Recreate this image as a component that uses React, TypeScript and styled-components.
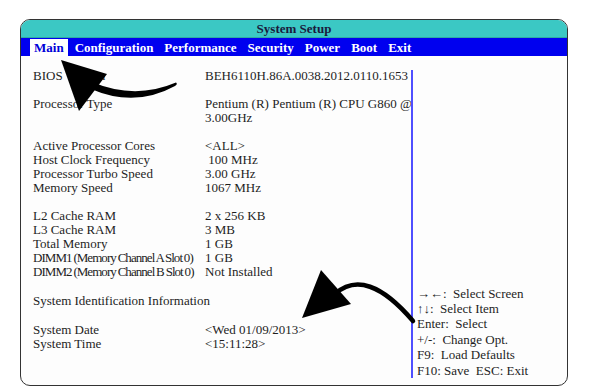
import styled, { createGlobalStyle } from "styled-components";

const GlobalStyle = createGlobalStyle`
  html, body {
    margin: 0;
    padding: 0;
    background: #ffffff;
  }
  body {
    font-family: "Liberation Serif", "DejaVu Serif", serif;
    color: #1e1e1e;
  }
`;

const Page = styled.div`
  position: relative;
  width: 606px;
  height: 388px;
  overflow: hidden;
  padding: 19px 0 0 20px;
  box-sizing: border-box;
`;

const Frame = styled.div`
  width: 548px;
  height: 367px;
  box-sizing: border-box;
  border: 1.5px solid #333333;
  border-radius: 10px;
  overflow: hidden;
  display: flex;
  flex-direction: column;
  background: #fdfdfd;
`;

const TitleBar = styled.div`
  height: 17px;
  line-height: 18px;
  background: #3bc8c4;
  border-bottom: 1px solid #2fa9a6;
  text-align: center;
  font-weight: bold;
  font-size: 13px;
  color: #1a1a3c;
`;

const MenuBar = styled.div`
  height: 18px;
  background: #0000ef;
  display: flex;
  align-items: flex-end;
  gap: 3px;
  padding-left: 9px;
`;

const MenuItem = styled.div<{ $active?: boolean }>`
  height: 17px;
  line-height: 17px;
  padding: 0 4px;
  font-weight: bold;
  font-size: 13px;
  color: ${(p) => (p.$active ? "#0000d8" : "#ffffff")};
  background: ${(p) => (p.$active ? "#ffffff" : "transparent")};
`;

const Body = styled.div`
  flex: 1;
  display: flex;
`;

const InfoPanel = styled.div`
  width: 390px;
  padding: 13px 0 0 12px;
  box-sizing: border-box;
  font-size: 13px;
  line-height: 14px;
`;

const Section = styled.div<{ $gap: number }>`
  margin-top: ${(p) => p.$gap}px;
`;

const Row = styled.div`
  display: grid;
  grid-template-columns: 172px 1fr;
  white-space: nowrap;
`;

const Label = styled.span<{ $tight?: boolean }>`
  letter-spacing: ${(p) => (p.$tight ? "-0.95px" : "0")};
  word-spacing: ${(p) => (p.$tight ? "-0.5px" : "0")};
`;

const Value = styled.span``;

const HelpPanel = styled.div`
  flex: 1;
  margin: 14px 0 7px;
  border-left: 2px solid #4f4fff;
  padding-left: 4px;
  display: flex;
  flex-direction: column;
  justify-content: flex-end;
  font-size: 13px;
  line-height: 15.4px;
  white-space: pre;
`;

const Arrows = styled.svg`
  position: absolute;
  left: 0;
  top: 0;
  pointer-events: none;
`;

const menu = ["Main", "Configuration", "Performance", "Security", "Power", "Boot", "Exit"];

type Item = { label: string; value: string; tight?: boolean };

const sections: { gap: number; rows: Item[] }[] = [
  { gap: 0, rows: [{ label: "BIOS Version", value: "BEH6110H.86A.0038.2012.0110.1653" }] },
  {
    gap: 14,
    rows: [
      { label: "Processor Type", value: "Pentium (R) Pentium (R) CPU G860 @" },
      { label: "", value: "3.00GHz" },
    ],
  },
  {
    gap: 14,
    rows: [
      { label: "Active Processor Cores", value: "<ALL>" },
      { label: "Host Clock Frequency", value: "\u00a0100 MHz" },
      { label: "Processor Turbo Speed", value: "3.00 GHz" },
      { label: "Memory Speed", value: "1067 MHz" },
    ],
  },
  {
    gap: 14,
    rows: [
      { label: "L2 Cache RAM", value: "2 x 256 KB" },
      { label: "L3 Cache RAM", value: "3 MB" },
      { label: "Total Memory", value: "1 GB" },
      { label: "DIMM1 (Memory Channel A Slot 0)", value: "1 GB", tight: true },
      { label: "DIMM2 (Memory Channel B Slot 0)", value: "Not Installed", tight: true },
    ],
  },
  { gap: 15, rows: [{ label: "System Identification Information", value: "" }] },
  {
    gap: 15,
    rows: [
      { label: "System Date", value: "<Wed 01/09/2013>" },
      { label: "System Time", value: "<15:11:28>" },
    ],
  },
];

const help = [
  "\u2192\u2190:  Select Screen",
  "\u2191\u2193:  Select Item",
  "Enter:  Select",
  "+/-:  Change Opt.",
  "F9:  Load Defaults",
  "F10: Save  ESC: Exit",
];

export default function App() {
  return (
    <>
      <GlobalStyle />
      <Page>
        <Frame>
          <TitleBar>System Setup</TitleBar>
          <MenuBar>
            {menu.map((m, i) => (
              <MenuItem key={m} $active={i === 0}>
                {m}
              </MenuItem>
            ))}
          </MenuBar>
          <Body>
            <InfoPanel>
              {sections.map((s, i) => (
                <Section key={i} $gap={s.gap}>
                  {s.rows.map((r, j) => (
                    <Row key={j}>
                      <Label $tight={r.tight}>{r.label}</Label>
                      <Value>{r.value}</Value>
                    </Row>
                  ))}
                </Section>
              ))}
            </InfoPanel>
            <HelpPanel>
              {help.map((h) => (
                <div key={h}>{h}</div>
              ))}
            </HelpPanel>
          </Body>
        </Frame>
        {/* pointer arrows drawn over the screenshot */}
        <Arrows width="606" height="388" viewBox="0 0 606 388">
          <path d="M176 82.5 Q135 100 92 82 L91 89 Q135 108 175 86 Q178 84 176 82.5 Z" fill="#000" />
          <polygon points="61,60 107,74 79,111" fill="#000" />
          <path d="M335 294 Q366 266 413 321" fill="none" stroke="#000" strokeWidth="4.5" strokeLinecap="round" />
          <polygon points="302,318 321,270 351,304" fill="#000" />
        </Arrows>
      </Page>
    </>
  );
}
